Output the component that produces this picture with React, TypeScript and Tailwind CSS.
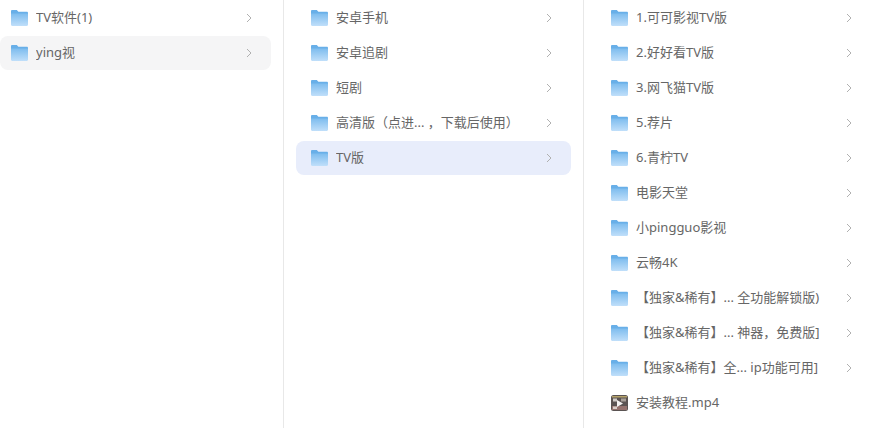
const columnOne = [
  { name: "TV软件(1)" },
  { name: "ying视", active: "gray" },
];

const columnTwo = [
  { name: "安卓手机" },
  { name: "安卓追剧" },
  { name: "短剧" },
  { name: "高清版（点进... ，下载后使用）" },
  { name: "TV版", active: "blue" },
];

const columnThree = [
  { name: "1.可可影视TV版" },
  { name: "2.好好看TV版" },
  { name: "3.网飞猫TV版" },
  { name: "5.荐片" },
  { name: "6.青柠TV" },
  { name: "电影天堂" },
  { name: "小pingguo影视" },
  { name: "云畅4K" },
  { name: "【独家&稀有】... 全功能解锁版)" },
  { name: "【独家&稀有】... 神器，免费版]" },
  { name: "【独家&稀有】全... ip功能可用]" },
  { name: "安装教程.mp4", video: true },
];

type Item = { name: string; active?: string; video?: boolean };

function FolderIcon() {
  return (
    <svg width="17" height="16" viewBox="0 0 17 16" className="shrink-0">
      <defs>
        <linearGradient id="folderBody" x1="0" y1="0" x2="0" y2="1">
          <stop offset="0" stopColor="#7dbcee" />
          <stop offset="1" stopColor="#c0dffa" />
        </linearGradient>
      </defs>
      <path d="M0 1.2C0 .5.5 0 1.2 0h4.6l1.6 1.8h8.400c.7 0 1.200.5 1.200 1.200v2H0z" fill="#68afe8" />
      <path d="M0 3.400h17v11.400c0 .7-.5 1.200-1.200 1.200H1.200C.5 16 0 15.500 0 14.800z" fill="url(#folderBody)" />
    </svg>
  );
}

function VideoThumb() {
  return (
    <svg width="17" height="16" viewBox="0 0 17 16" className="shrink-0">
      <rect width="17" height="16" rx="2.500" fill="#5a5352" />
      <rect x="1" y="1" width="15" height="1.500" fill="#b5a36a" />
      <rect x="2" y="3.500" width="4" height="3" fill="#cfcac6" />
      <rect x="10" y="3.500" width="5" height="3" fill="#a89f98" />
      <rect x="1" y="11" width="15" height="4" fill="#94726e" />
      <rect x="2" y="11.500" width="4" height="2.500" fill="#d9cfca" />
      <path d="M6 5l6 3.500-6 3.500z" fill="#f4f2f2" />
    </svg>
  );
}

function Chevron() {
  return (
    <svg width="6" height="10" viewBox="0 0 6 10" className="shrink-0" fill="none">
      <path d="M1 1l4 4-4 4" stroke="#b0b0b0" strokeWidth="1" />
    </svg>
  );
}

function Row({ item, indent }: { item: Item; indent: string }) {
  const bg = item.active === "gray" ? "bg-[#f5f5f6]" : item.active === "blue" ? "bg-[#e8edfb]" : "";
  return (
    <div className={`h-[34px] mb-px flex items-center rounded-lg pr-[19px] ${indent} ${bg}`}>
      {item.video ? <VideoThumb /> : <FolderIcon />}
      <span className="ml-[8px] flex-1 truncate text-[13px] text-[#666666]">{item.name}</span>
      {!item.video && <Chevron />}
    </div>
  );
}

export default function App() {
  return (
    <div className="w-[878px] h-[428px] overflow-hidden bg-white flex font-['Noto_Sans','Noto_Sans_CJK_SC',sans-serif]">
      {/* 左栏 */}
      <div className="w-[284px] h-full shrink-0 border-r border-[#e8e8e8] pt-px pr-3">
        {columnOne.map((item) => (
          <Row key={item.name} item={item} indent="pl-[11px]" />
        ))}
      </div>
      <div className="w-[300px] h-full shrink-0 border-r border-[#e8e8e8] pt-px px-3">
        {columnTwo.map((item) => (
          <Row key={item.name} item={item} indent="pl-[15px]" />
        ))}
      </div>
      <div className="flex-1 h-full pt-px pl-3 pr-[7px]">
        {columnThree.map((item) => (
          <Row key={item.name} item={item} indent="pl-[15px]" />
        ))}
      </div>
    </div>
  );
}
